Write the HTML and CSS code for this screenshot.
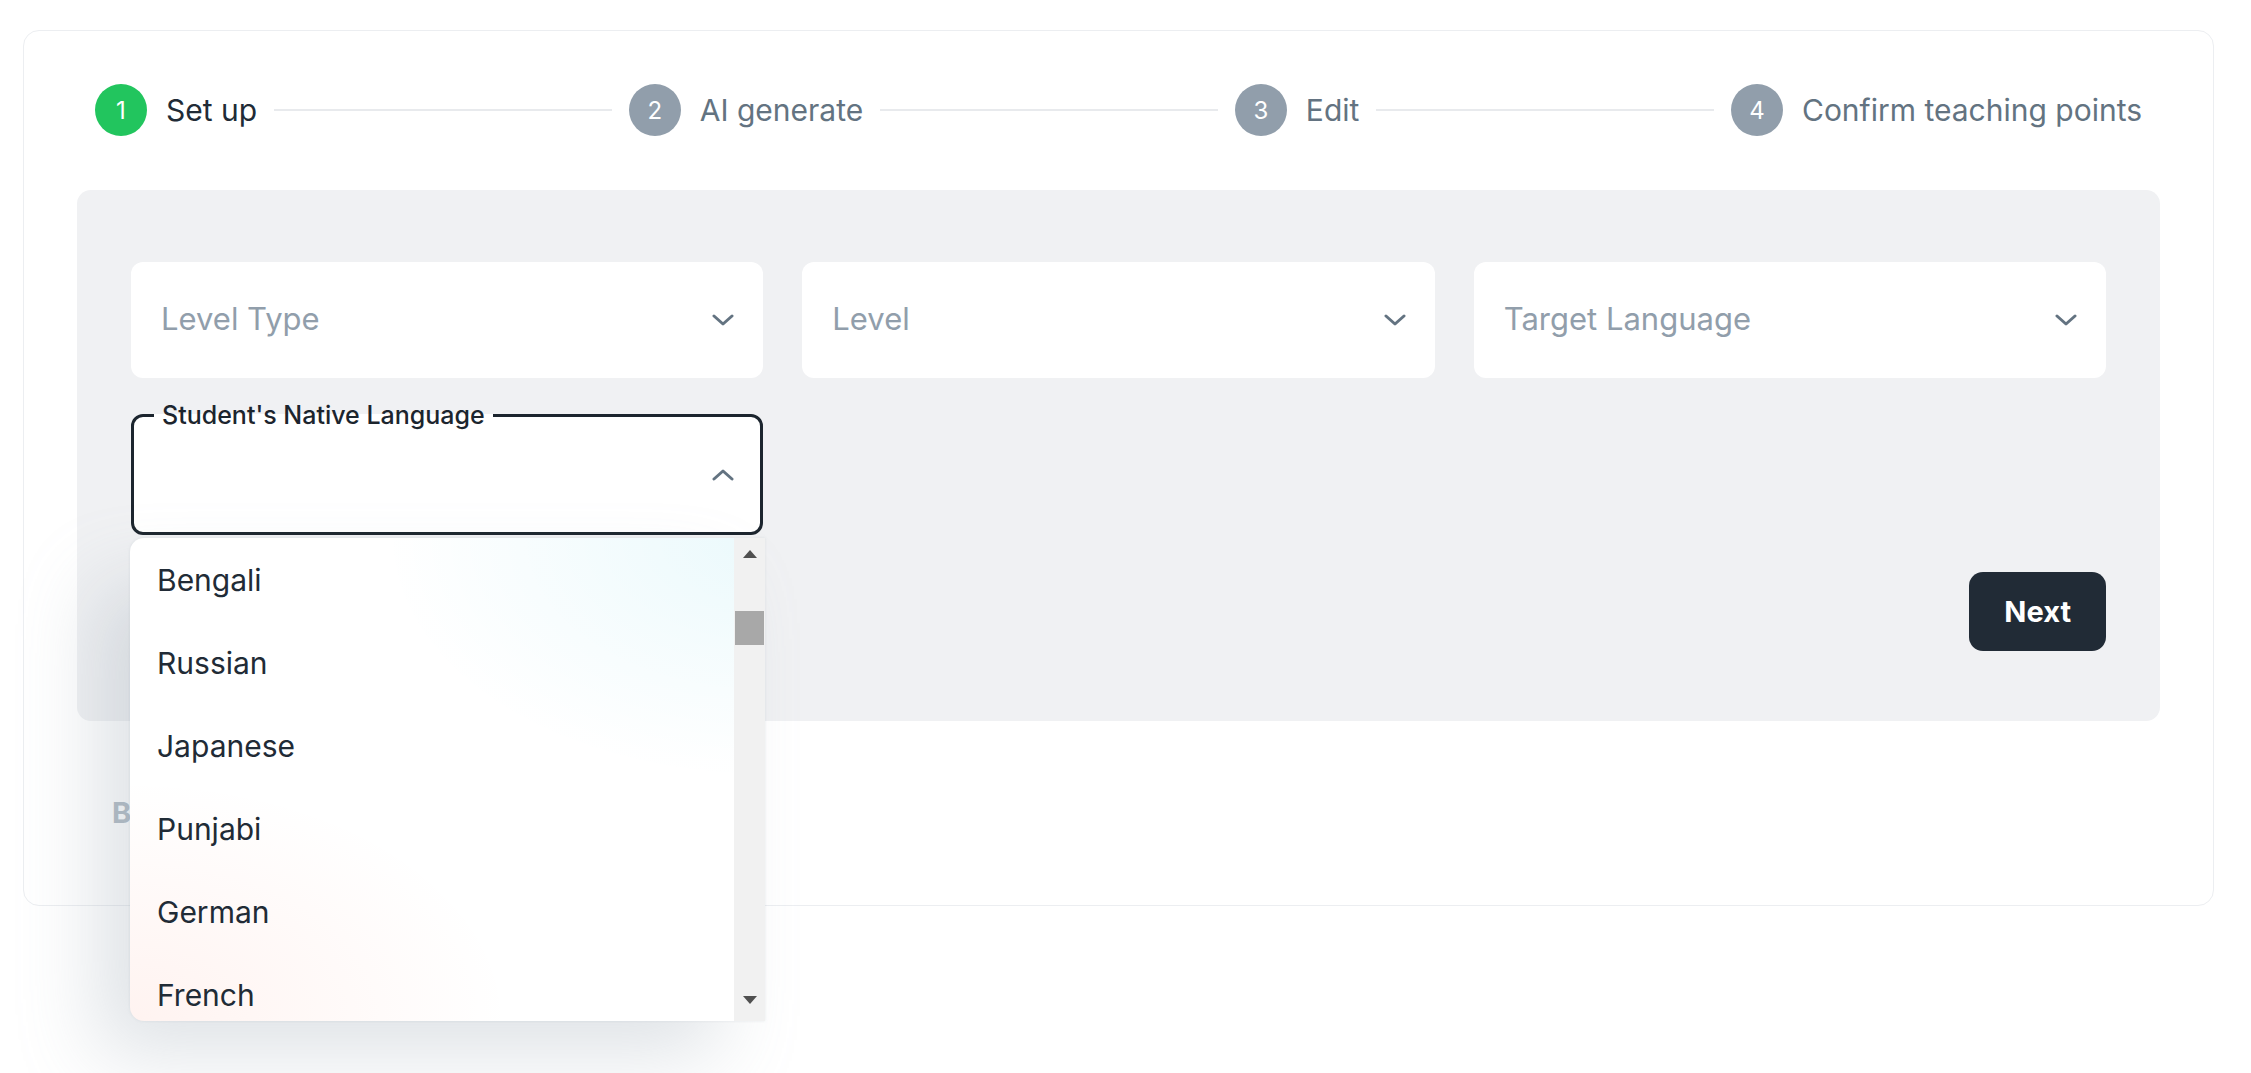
FILE: index.html
```html
<!DOCTYPE html>
<html lang="en">
<head>
<meta charset="utf-8">
<title>Set up</title>
<link rel="stylesheet" href="styles.css">
</head>
<body>
<div class="card">
  <div class="stepper">
    <div class="step active"><span class="step-num">1</span><span class="step-label">Set up</span></div>
    <div class="step-line"></div>
    <div class="step"><span class="step-num">2</span><span class="step-label">AI generate</span></div>
    <div class="step-line"></div>
    <div class="step"><span class="step-num">3</span><span class="step-label">Edit</span></div>
    <div class="step-line"></div>
    <div class="step"><span class="step-num">4</span><span class="step-label">Confirm teaching points</span></div>
  </div>

  <div class="panel">
    <div class="fields">
      <div class="select">
        <span class="placeholder">Level Type</span>
        <svg class="chev" width="22" height="12" viewBox="0 0 22 12"><path d="M2 2l9 8 9-8" fill="none" stroke="#637381" stroke-width="3" stroke-linecap="round" stroke-linejoin="round"/></svg>
      </div>
      <div class="select">
        <span class="placeholder">Level</span>
        <svg class="chev" width="22" height="12" viewBox="0 0 22 12"><path d="M2 2l9 8 9-8" fill="none" stroke="#637381" stroke-width="3" stroke-linecap="round" stroke-linejoin="round"/></svg>
      </div>
      <div class="select">
        <span class="placeholder">Target Language</span>
        <svg class="chev" width="22" height="12" viewBox="0 0 22 12"><path d="M2 2l9 8 9-8" fill="none" stroke="#637381" stroke-width="3" stroke-linecap="round" stroke-linejoin="round"/></svg>
      </div>

      <div class="native-wrap">
        <fieldset class="native">
          <legend>Student's Native Language</legend>
          <div class="native-inner">
            <svg class="chev" width="22" height="12" viewBox="0 0 22 12"><path d="M2 10l9-8 9 8" fill="none" stroke="#637381" stroke-width="3" stroke-linecap="round" stroke-linejoin="round"/></svg>
          </div>
        </fieldset>
        <div class="menu">
          <ul class="menu-list">
            <li>Bengali</li>
            <li>Russian</li>
            <li>Japanese</li>
            <li>Punjabi</li>
            <li>German</li>
            <li>French</li>
          </ul>
          <div class="menu-scroll">
            <svg class="arrow" width="14" height="8" viewBox="0 0 14 8"><path d="M7 0L14 8H0z" fill="#505050"/></svg>
            <div class="thumb"></div>
            <svg class="arrow down" width="14" height="8" viewBox="0 0 14 8"><path d="M0 0H14L7 8z" fill="#505050"/></svg>
          </div>
        </div>
      </div>
    </div>
    <div class="actions">
      <button class="btn-next">Next</button>
    </div>
  </div>

  <div class="back-row">
    <button class="btn-back">Back</button>
  </div>
</div>
</body>
</html>
```

FILE: styles.css
```css
* { box-sizing: border-box; }

html, body {
  margin: 0;
  padding: 0;
  background: #ffffff;
  font-family: Inter, "Noto Sans", "Liberation Sans", sans-serif;
  color: #212b36;
}

body {
  height: 1073px;
  overflow: hidden;
}

.card {
  margin: 30px 37px 0 23px;
  border: 1px solid #eceef1;
  border-radius: 16px;
  background: #ffffff;
  padding: 53px 53px 53px 53px;
}

/* Stepper */
.stepper {
  display: flex;
  align-items: center;
  height: 52px;
  margin: 0 18px;
}

.step {
  display: flex;
  align-items: center;
  gap: 19px;
}

.step-num {
  width: 52px;
  height: 52px;
  border-radius: 50%;
  background: #919eab;
  color: #ffffff;
  font-size: 24px;
  display: flex;
  align-items: center;
  justify-content: center;
}

.step.active .step-num { background: #22c55e; }

.step-label {
  font-size: 30px;
  color: #637381;
  white-space: nowrap;
}

.step.active .step-label { color: #212b36; }

.step-line {
  flex: 1;
  height: 2px;
  background: #e8eaed;
  margin: 0 17px;
}

/* Panel */
.panel {
  margin-top: 54px;
  background: #f0f1f3;
  border-radius: 14px;
  padding: 72px 54px 70px 54px;
}

.fields {
  display: grid;
  grid-template-columns: repeat(3, 1fr);
  column-gap: 39px;
  row-gap: 22px;
}

.select {
  height: 116px;
  background: #ffffff;
  border-radius: 12px;
  display: flex;
  align-items: center;
  justify-content: space-between;
  padding: 0 29px 4px 30px;
}

.placeholder {
  font-size: 31px;
  color: #919eab;
}

.chev { display: block; }

.select .chev { margin-top: 4px; }

.native-wrap {
  position: relative;
}

.native {
  margin: 0;
  padding: 0 26px 0 20px;
  border: 3px solid #1c252e;
  border-radius: 12px;
  background: #ffffff;
  min-width: 0;
}

.native legend {
  padding: 0 8px;
  font-size: 25px;
  line-height: 30px;
  font-weight: 500;
  color: #1c252e;
}

.native-inner {
  height: 102px;
  padding-bottom: 12px;
  display: flex;
  align-items: center;
  justify-content: flex-end;
}

/* Dropdown menu */
.menu {
  position: absolute;
  top: calc(100% + 3px);
  left: -1px;
  width: 635px;
  height: 483px;
  display: flex;
  z-index: 10;
  border-radius: 14px 0 0 14px;
  overflow: hidden;
  background:
    radial-gradient(ellipse 60% 50% at 100% 0%, rgba(0, 184, 217, 0.08), rgba(0, 184, 217, 0) 100%),
    radial-gradient(ellipse 60% 50% at 0% 100%, rgba(255, 86, 48, 0.07), rgba(255, 86, 48, 0) 100%),
    #ffffff;
  box-shadow: 0 0 3px rgba(145, 158, 171, 0.2), -40px 40px 80px -8px rgba(145, 158, 171, 0.3);
}

.menu-list {
  flex: 1;
  list-style: none;
  margin: 0;
  padding: 0;
  overflow: hidden;
}

.menu-list li {
  height: 83px;
  flex-shrink: 0;
  display: flex;
  align-items: center;
  padding-left: 27px;
  font-size: 30px;
  color: #212b36;
}

.menu-scroll {
  width: 31px;
  background: #f1f1f1;
  display: flex;
  flex-direction: column;
  align-items: center;
  padding: 12px 0 17px 0;
}

.arrow { display: block; flex-shrink: 0; }

.thumb {
  width: 29px;
  height: 34px;
  background: #a8a8a8;
  margin-top: 53px;
}

.arrow.down { margin-top: auto; }

/* Actions */
.actions {
  display: flex;
  justify-content: flex-end;
  margin-top: 37px;
}

.btn-next {
  height: 79px;
  padding: 0 35px;
  border: none;
  border-radius: 14px;
  background: #212b36;
  color: #ffffff;
  font-family: inherit;
  font-size: 29px;
  font-weight: 700;
}

.back-row {
  margin-top: 52px;
  display: flex;
}

.btn-back {
  height: 79px;
  padding: 0 35px;
  border: none;
  background: transparent;
  color: #b2bcc5;
  font-family: inherit;
  font-size: 29px;
  font-weight: 700;
}
```
